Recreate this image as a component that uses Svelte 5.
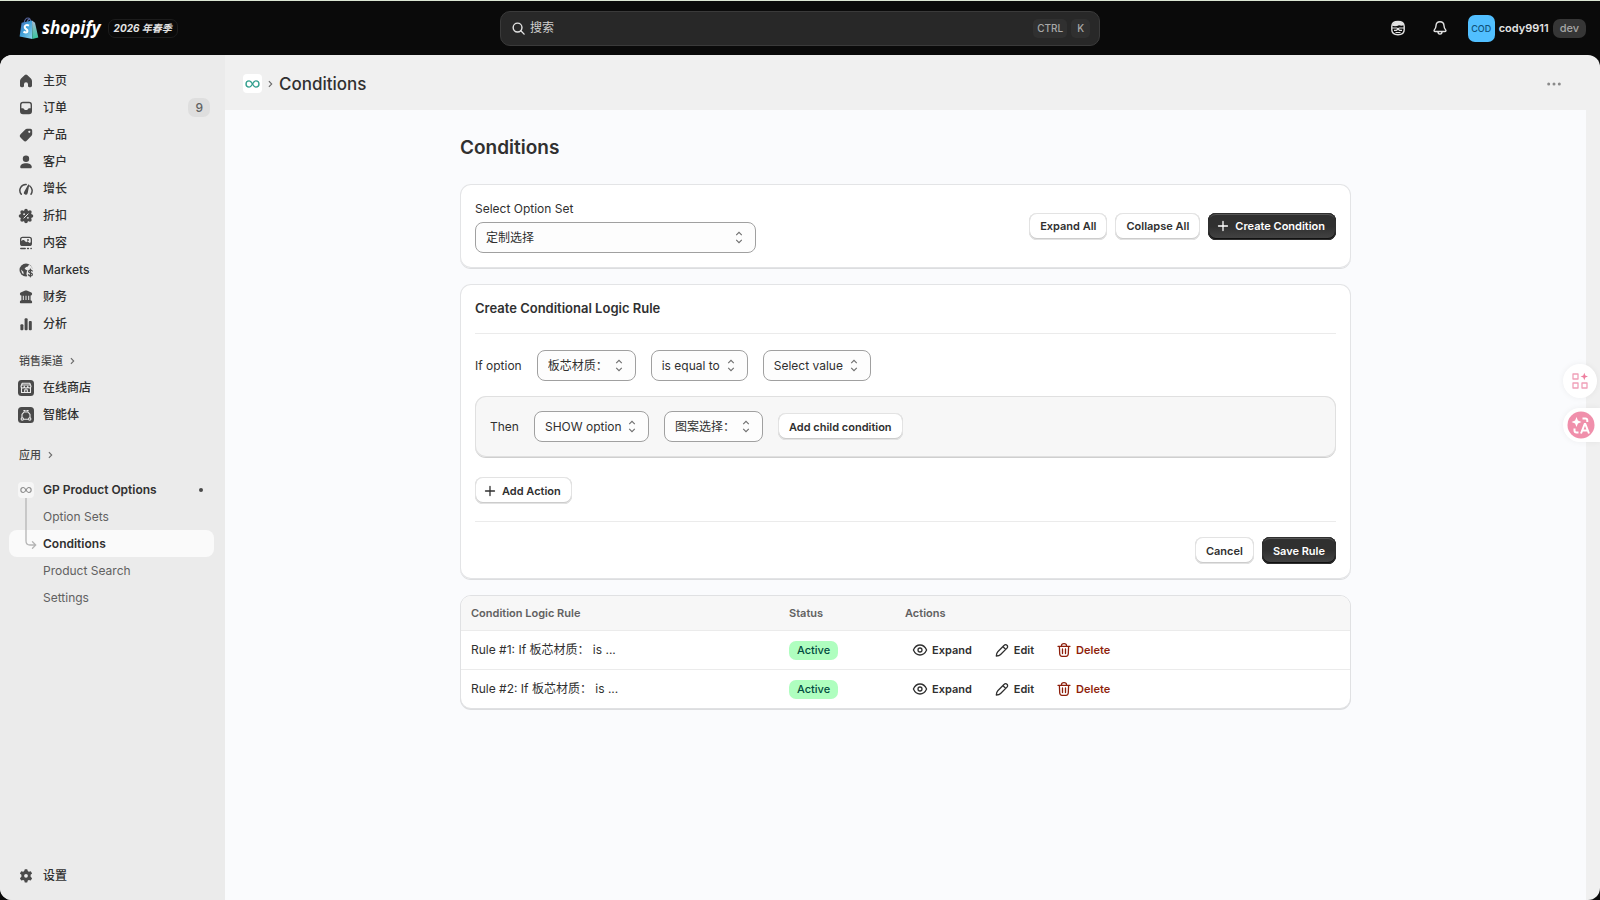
<script lang="ts">
	const mainNav = [
		{ icon: 'home', label: '主页' },
		{ icon: 'orders', label: '订单', count: 9 },
		{ icon: 'products', label: '产品' },
		{ icon: 'customers', label: '客户' },
		{ icon: 'growth', label: '增长' },
		{ icon: 'discounts', label: '折扣' },
		{ icon: 'content', label: '内容' },
		{ icon: 'markets', label: 'Markets' },
		{ icon: 'finance', label: '财务' },
		{ icon: 'analytics', label: '分析' }
	];

	const channels = [
		{ icon: 'store', label: '在线商店' },
		{ icon: 'agent', label: '智能体' }
	];

	const appPages = ['Option Sets', 'Conditions', 'Product Search', 'Settings'];
	let currentPage = $state('Conditions');

	const rules = [
		{ id: 1, name: 'Rule #1: If 板芯材质： is ...', status: 'Active' },
		{ id: 2, name: 'Rule #2: If 板芯材质： is ...', status: 'Active' }
	];
</script>

<svelte:head>
	<title>Conditions</title>
</svelte:head>

{#snippet icon(name: string)}
	<svg class="icon" viewBox="0 0 16 16" aria-hidden="true">
		{#if name === 'home'}
			<path
				d="M6.8 2.1a1.8 1.8 0 0 1 2.4 0l3.7 3.5c.7.7 1.1 1.6 1.1 2.5v4.4c0 1-.7 1.7-1.6 1.7h-1.2c-.7 0-1.2-.5-1.2-1.2v-1.8a2 2 0 0 0-4 0V13c0 .7-.5 1.2-1.2 1.2H3.6c-.9 0-1.6-.7-1.6-1.7V8.1c0-.9.4-1.8 1.1-2.5z"
			/>
		{:else if name === 'orders'}
			<path
				fill-rule="evenodd"
				d="M5 1.8h6a3 3 0 0 1 3 3v6.4a3 3 0 0 1-3 3H5a3 3 0 0 1-3-3V4.8a3 3 0 0 1 3-3zm0 1.4c-.9 0-1.6.7-1.6 1.6v3.4h1.5c.6 0 .9.3 1.1.8.3.7.8 1 2 1s1.7-.3 2-1c.2-.5.5-.8 1.1-.8h1.5V4.8c0-.9-.7-1.6-1.6-1.6z"
			/>
		{:else if name === 'products'}
			<path
				fill-rule="evenodd"
				d="M9 1.8h3.3c1.1 0 1.900.8 1.900 1.900V7c0 .7-.3 1.300-.7 1.800l-4.600 4.800a2.400 2.400 0 0 1-3.400 0l-3-3a2.400 2.400 0 0 1 0-3.400l4.800-4.700c.5-.5 1-.7 1.700-.7zm2.300 4.100a1.100 1.100 0 1 0 0-2.200 1.100 1.100 0 0 0 0 2.200z"
			/>
		{:else if name === 'customers'}
			<circle cx="8" cy="4.7" r="3.2" />
			<path d="M2.2 13c0-2.300 2.600-3.700 5.800-3.700s5.800 1.400 5.800 3.700c0 .8-.6 1.300-1.300 1.300h-9c-.7 0-1.300-.5-1.300-1.300z" />
		{:else if name === 'growth'}
			<path
				class="line"
				d="M3.300 13.200a5.900 5.900 0 0 1 4.900-9.700M11.800 5a5.900 5.900 0 0 1 1.200 8.200"
			/>
			<path d="M10.700 3.400c.4 0 .6.400.5.800L9.700 12a1.900 1.900 0 1 1-3.500-1.300l4-7.100c.1-.1.300-.2.500-.2z" />
		{:else if name === 'discounts'}
			<circle cx="8" cy="8" r="5.800" />
			<path
				class="scallop"
				d="M8 2.500v0M11.900 4.100v0M13.500 8v0M11.900 11.900v0M8 13.500v0M4.100 11.900v0M2.500 8v0M4.100 4.100v0"
			/>
			<path class="cut" d="M5.900 10.100l4.200-4.200" />
			<circle class="hole" cx="6.100" cy="6.200" r=".9" />
			<circle class="hole" cx="9.900" cy="9.800" r=".9" />
		{:else if name === 'content'}
			<path
				fill-rule="evenodd"
				d="M4.600 1.800h6.800A2.600 2.600 0 0 1 14 4.400v4a2.600 2.600 0 0 1-2.600 2.600H4.600A2.600 2.600 0 0 1 2 8.400v-4a2.600 2.600 0 0 1 2.600-2.600zm0 1.300c-.8 0-1.300.6-1.300 1.300v1.700l1.500-1c.5-.3 1-.3 1.400.1l2 2 .6-.4c.5-.4 1.100-.3 1.500.1l1.400 1c.6-.2 1-.3 1-.8V4.400c0-.7-.5-1.300-1.300-1.300z"
			/>
			<circle cx="10" cy="5" r=".9" />
			<path class="line" d="M2.800 13.500h4.400M9.600 13.500h.8M13 13.500h.2" />
		{:else if name === 'markets'}
			<circle cx="8" cy="8" r="6.500" />
			<path class="hole" d="M8.300 2.900l2 .2-1.800 2-2 .8L5 7.200l1.600 1.600 2.200.4.5 1.400-1.700 2.400-.5 1.500-1.800-.6-.3-2.300-2.200-3-.3-2.200L4.500 4z" opacity=".0" />
			<path class="hole" d="M11 2.600l2.400 2 1.300 3.200-1.700-1-2 .2-1.400 1.600-1.800-.8-1.200-1.200 1.500-1.500 1.800-.5z" />
			<path class="hole" d="M3 7.600l2.300 2.100.4 2.600-1.600-1.100z" />
			<path class="hole" d="M10.200 6.500h6V16H8.700l.6-2-.9-1.800.4-2.800z" />
			<path class="thin" d="M14.200 9.100c-.3-.7-1-1-1.800-1-1 0-1.800.5-1.800 1.400 0 2 3.800.9 3.800 2.900 0 .9-.8 1.500-1.900 1.500-1 0-1.800-.4-2.100-1.200M12.400 7.200v7.600" />
		{:else if name === 'finance'}
			<path
				fill-rule="evenodd"
				d="M7.200 1.600c.5-.2 1.100-.2 1.600 0l4.500 2c.5.300.8.800.8 1.300 0 .9-.7 1.500-1.500 1.500v4.900c.8.100 1.500.8 1.500 1.600v.6c0 .4-.3.700-.7.700H2.600c-.4 0-.7-.3-.7-.7v-.6c0-.8.700-1.500 1.500-1.600V6.400c-.8 0-1.500-.6-1.500-1.500 0-.5.300-1 .8-1.300zM4.800 6.800v4.300h1V6.800zm2.700 0v4.300h1V6.800zm2.700 0v4.300h1V6.800z"
			/>
		{:else if name === 'analytics'}
			<rect x="2.400" y="8.200" width="3" height="6" rx="1" />
			<rect x="6.600" y="2.200" width="3" height="12" rx="1" />
			<rect x="10.800" y="5" width="3" height="9.200" rx="1" />
		{:else if name === 'settings'}
			<path
				fill-rule="evenodd"
				d="M6.800 1.200h2.400l.6 1.900 1 .6 2-.5 1.300 2.200-1.500 1.400v2l1.500 1.500-1.300 2.200-2-.6-1 .6-.6 1.900H6.800l-.6-1.900-1-.6-2 .6-1.300-2.200 1.500-1.500v-2L1.900 5.400l1.300-2.200 2 .5 1-.6zM8 9.700a1.900 1.900 0 1 0 0-3.800 1.900 1.900 0 0 0 0 3.800z"
			/>
		{:else if name === 'store'}
			<rect x="0" y="0" width="16" height="16" rx="3.500" />
			<path class="light" d="M3.500 7v5.500h9V7M4.200 3.200h7.600l1.200 3a1.600 1.600 0 0 1-3.300.2 1.700 1.700 0 0 1-3.400 0A1.600 1.600 0 0 1 3 6.200zM6.700 12.500V9.700h2.600v2.800M4 5h8" />
		{:else if name === 'agent'}
			<rect x="0" y="0" width="16" height="16" rx="3.500" />
			<path class="light" d="M6 5h4l2 2.300v3.300M6 5L4 7.300v3.300M6.300 12.300h3.400M5.800 3.600h1.400M8.800 3.600h1.400" />
			<circle class="light" cx="4.300" cy="12" r="1.200" />
			<circle class="light" cx="11.700" cy="12" r="1.200" />
		{:else if name === 'plus'}
			<path class="stroke" d="M8 3.500v9M3.500 8h9" />
		{:else if name === 'eye'}
			<path class="stroke" d="M1.400 8c1.300-2.900 3.700-5 6.600-5s5.300 2.100 6.600 5c-1.300 2.900-3.700 5-6.600 5S2.700 10.900 1.400 8z" />
			<circle class="stroke" cx="8" cy="8" r="2" />
		{:else if name === 'pencil'}
			<path class="stroke" d="M10.200 3.300a1.900 1.900 0 0 1 2.800 0c.8.800.8 2 0 2.800l-6.400 6.400c-1 1-2.600 1.400-4.300 1.500.1-1.700.5-3.300 1.500-4.300zM9 4.700l2.600 2.600" />
		{:else if name === 'trash'}
			<path class="stroke" d="M2 4.300h12M5.500 4V3.600C5.500 2.300 6.300 1.600 8 1.600s2.500.7 2.500 2V4M3.400 4.500l.3 7.300c.1 1.600.9 2.500 2.300 2.500h4c1.400 0 2.200-.9 2.300-2.500l.3-7.300M6.500 7v4.500M9.500 7v4.500" />
		{/if}
	</svg>
{/snippet}

{#snippet infinity()}
	<svg viewBox="0 0 16 10" aria-hidden="true">
		<path
			d="M8 5C6.800 2.800 5.700 1.700 4.400 1.700a3.300 3.300 0 0 0 0 6.600C5.700 8.300 6.800 7.200 8 5s2.300-3.300 3.600-3.300a3.300 3.300 0 0 1 0 6.600C10.300 8.300 9.200 7.200 8 5z"
			fill="none"
			stroke="currentColor"
			stroke-width="1.500"
		/>
	</svg>
{/snippet}

{#snippet picker(id: string, label: string, value: string)}
	<span class="picker">
		<select {id} aria-label={label}>
			<option>{value}</option>
		</select>
		<svg viewBox="0 0 8 14" aria-hidden="true">
			<path d="M1 4.500l3-3 3 3M1 9.500l3 3 3-3" />
		</svg>
	</span>
{/snippet}

<header class="topbar">
	<div class="brand">
		<svg class="bag" viewBox="0 0 20 22" aria-hidden="true">
			<defs>
				<linearGradient id="bag" x1="0" y1="0" x2="1" y2="1">
					<stop offset="0" stop-color="#4a69b4" />
					<stop offset=".45" stop-color="#3f9fd8" />
					<stop offset="1" stop-color="#8fd6ee" />
				</linearGradient>
				<linearGradient id="side" x1="0" y1="0" x2="0" y2="1">
					<stop offset="0" stop-color="#a9b9d6" />
					<stop offset="1" stop-color="#35c49b" />
				</linearGradient>
			</defs>
			<path d="M5.200 6C5.600 3 7.200 1 9 1s2.600 1.600 2.600 4M8 5.500C8.500 3 9.800 1.700 11 2.200" fill="none" stroke="#56649a" stroke-width="1.200" />
			<path d="M2.600 5.800L13 3.600 13.400 22 .6 19.600z" fill="url(#bag)" />
			<path d="M13 3.600l3 2.200 3.300 14.600-5.900 1.600z" fill="url(#side)" />
			<path d="M10 8.700c-2.700-1.500-4.800.2-4.200 1.900.5 1.500 2.700 1.800 2.700 3.500 0 1.900-2.300 1.700-4 .5" fill="none" stroke="#fff" stroke-width="2" />
		</svg>
		<span class="wordmark">shopify</span>
		<span class="edition">2026 年春季</span>
	</div>

	<label class="search">
		<svg viewBox="0 0 16 16" aria-hidden="true">
			<circle cx="7" cy="7" r="4.700" />
			<path d="M10.500 10.500l3.500 3.500" />
		</svg>
		<input type="text" placeholder="搜索" aria-label="搜索" />
		<kbd>CTRL</kbd>
		<kbd>K</kbd>
	</label>

	<div class="account">
		<button class="bare" aria-label="Sidekick">
			<svg viewBox="0 0 16 16" aria-hidden="true">
				<path d="M1.800 6.200C2 3 4.400 1.500 8 1.500S14 3 14.200 6.200v3.600c0 3-2.200 4.900-6.200 4.900s-6.200-1.900-6.200-4.900z" fill="none" stroke="#e3e3e3" stroke-width="1.400" />
				<path d="M2 5.800C3 2.600 5 1.500 8 1.500s5.300 1.300 6 3.600c-1.600.9-3.300.8-5 .2-2 1-4.500 1-7 .5z" fill="#e3e3e3" />
				<path d="M2 8h4.800L8 8.800 9.200 8H14M4 10.300h2.300L8 9.200l1.700 1.100H12M5.500 12.500h5" fill="none" stroke="#e3e3e3" stroke-width="1.200" />
			</svg>
		</button>
		<button class="bare bell" aria-label="Notifications">
			<svg viewBox="0 0 16 16" aria-hidden="true">
				<path d="M8 1.700c-2.500 0-3.900 1.700-4 4-.1 2-.6 2.900-1.500 3.900-.8.900-.4 1.900.7 1.900h9.600c1.100 0 1.500-1 .7-1.900-.9-1-1.400-1.900-1.500-3.900-.1-2.300-1.500-4-4-4zM6 11.800c0 1.300.8 2.300 2 2.300s2-1 2-2.300" fill="none" stroke="#e3e3e3" stroke-width="1.400" />
			</svg>
		</button>
		<button class="user">
			<span class="avatar">COD</span>
			<span>cody9911</span>
			<span class="env">dev</span>
		</button>
	</div>
</header>

<div class="frame">
	<aside class="sidebar">
		<nav aria-label="Main">
			{#each mainNav as item (item.label)}
				<a class="nav-item" href="#{item.icon}">
					{@render icon(item.icon)}
					<span>{item.label}</span>
					{#if item.count}<span class="count">{item.count}</span>{/if}
				</a>
			{/each}

			<button class="section">
				销售渠道
				<svg viewBox="0 0 6 10" aria-hidden="true"><path d="M1 1.500L4.500 5 1 8.500" /></svg>
			</button>
			{#each channels as item (item.label)}
				<a class="nav-item" href="#{item.icon}">
					{@render icon(item.icon)}
					<span>{item.label}</span>
				</a>
			{/each}

			<button class="section apps">
				应用
				<svg viewBox="0 0 6 10" aria-hidden="true"><path d="M1 1.500L4.500 5 1 8.500" /></svg>
			</button>
			<div class="app-tree">
				<a class="nav-item app" href="#app">
					<span class="app-icon">{@render infinity()}</span>
					<span>GP Product Options</span>
					<span class="dot"></span>
				</a>
				{#each appPages as page (page)}
					<a
						class="nav-item sub"
						class:active={page === currentPage}
						href="#{page}"
						onclick={() => (currentPage = page)}>{page}</a
					>
				{/each}
				<svg class="branch" viewBox="0 0 12 54" aria-hidden="true">
					<path d="M1 0v43q0 4 4 4h5.500M7.500 43.800l3.200 3.200-3.200 3.200" />
				</svg>
			</div>
		</nav>
		<a class="nav-item" href="#settings">
			{@render icon('settings')}
			<span>设置</span>
		</a>
	</aside>

	<div class="main">
		<div class="titlebar">
			<span class="app-icon large">{@render infinity()}</span>
			<svg class="crumb" viewBox="0 0 6 10" aria-hidden="true"><path d="M1 1.500L4.500 5 1 8.500" /></svg>
			<span class="crumb-title">Conditions</span>
			<button class="bare more" aria-label="More actions">
				<svg viewBox="0 0 14 4" aria-hidden="true">
					<circle cx="1.700" cy="2" r="1.500" />
					<circle cx="7" cy="2" r="1.500" />
					<circle cx="12.300" cy="2" r="1.500" />
				</svg>
			</button>
		</div>

		<main class="canvas">
			<div class="page">
				<h1>Conditions</h1>

				<section class="card option-set">
					<div class="field">
						<label for="option-set">Select Option Set</label>
						{@render picker('option-set', 'Select Option Set', '定制选择')}
					</div>
					<div class="buttons">
						<button class="btn">Expand All</button>
						<button class="btn">Collapse All</button>
						<button class="btn primary with-icon">{@render icon('plus')}Create Condition</button>
					</div>
				</section>

				<section class="card rule">
					<h2>Create Conditional Logic Rule</h2>
					<div class="condition">
						<span>If option</span>
						{@render picker('if-option', 'If option', '板芯材质：')}
						{@render picker('operator', 'Operator', 'is equal to')}
						{@render picker('value', 'Value', 'Select value')}
					</div>
					<div class="then">
						<span>Then</span>
						{@render picker('action', 'Action', 'SHOW option')}
						{@render picker('target', 'Target option', '图案选择：')}
						<button class="btn">Add child condition</button>
					</div>
					<button class="btn with-icon add">{@render icon('plus')}Add Action</button>
					<div class="buttons footer">
						<button class="btn">Cancel</button>
						<button class="btn primary">Save Rule</button>
					</div>
				</section>

				<section class="card rules">
					<table>
						<thead>
							<tr>
								<th class="col-rule">Condition Logic Rule</th>
								<th class="col-status">Status</th>
								<th>Actions</th>
							</tr>
						</thead>
						<tbody>
							{#each rules as rule (rule.id)}
								<tr>
									<td>{rule.name}</td>
									<td><span class="status">{rule.status}</span></td>
									<td>
										<div class="actions">
											<button class="link">{@render icon('eye')}Expand</button>
											<button class="link">{@render icon('pencil')}Edit</button>
											<button class="link danger">{@render icon('trash')}Delete</button>
										</div>
									</td>
								</tr>
							{/each}
						</tbody>
					</table>
				</section>
			</div>
		</main>
	</div>
</div>

<div class="floating">
	<button class="bubble" aria-label="Tools">
		<svg viewBox="0 0 18 18" aria-hidden="true">
			<path d="M2 2h5v5H2zM2 11h5v5H2zM11 11h5v5h-5z" fill="none" stroke="#f0a0b8" stroke-width="1.300" stroke-linejoin="round" />
			<path d="M13.300.8l1 2.700 2.700 1-2.700 1-1 2.700-1-2.700-2.700-1 2.700-1z" fill="#ee7f9f" />
		</svg>
	</button>
	<button class="bubble tab" aria-label="Translate">
		<svg viewBox="0 0 28 28" aria-hidden="true">
			<circle cx="14" cy="14" r="13.500" fill="#f08fab" />
			<path d="M9.500 6l1.400 3.600 3.600 1.400-3.600 1.400L9.500 16l-1.400-3.600L4.500 11l3.600-1.400z" fill="#fff" />
			<path d="M15.500 7.500h2.800q2 0 2 2V11M7.500 17.500v2q0 2 2 2h2M14 22.500l3.700-9.500h.6l3.700 9.500M15.200 19.500h5.600" fill="none" stroke="#fff" stroke-width="2" />
		</svg>
	</button>
</div>

<style>
	:global(body) {
		background: #0a0a0a;
		color: #303030;
		font-family: Inter, 'Noto Sans CJK SC', sans-serif;
		font-size: 12px;
		line-height: 16px;
	}

	button,
	input,
	select {
		font: inherit;
		color: inherit;
	}

	button {
		padding: 0;
		border: 0;
		background: none;
		cursor: pointer;
	}

	a {
		color: inherit;
		text-decoration: none;
	}

	svg {
		display: block;
		flex: none;
	}

	.icon {
		width: 16px;
		height: 16px;
		fill: currentColor;
	}

	.icon .line,
	.icon .thin,
	.icon .light,
	.icon .cut,
	.icon .scallop,
	.icon .stroke {
		fill: none;
		stroke: currentColor;
		stroke-width: 1.5;
		stroke-linecap: round;
		stroke-linejoin: round;
	}

	.icon .thin {
		stroke-width: 1.2;
	}

	.icon .stroke {
		stroke-width: 1.3;
	}

	.icon .scallop {
		stroke-width: 3.6;
	}

	.icon .hole {
		fill: #ebebeb;
	}

	.icon .cut {
		stroke: #ebebeb;
		stroke-width: 1;
	}

	.icon .light {
		stroke: #ebebeb;
		stroke-width: 1.1;
	}

	.topbar {
		display: grid;
		grid-template-columns: 1fr minmax(200px, 600px) 1fr;
		align-items: center;
		box-sizing: border-box;
		height: 55px;
		padding: 0 14px;
		border-top: 1px solid #dbe6d3;
		color: #e3e3e3;
	}

	.brand,
	.account,
	.user {
		display: flex;
		align-items: center;
	}

	.brand {
		padding-left: 5px;
	}

	.bag {
		width: 20px;
		height: 22px;
	}

	.wordmark {
		margin-left: 3px;
		font: italic 700 17px/24px 'Open Sans', sans-serif;
		color: #fff;
	}

	.edition {
		margin-left: 7px;
		padding: 0 5px;
		border: 1px solid #1c1c1c;
		border-radius: 7px;
		font-size: 10px;
		font-style: italic;
		font-weight: 700;
		line-height: 17px;
	}

	.search {
		display: flex;
		align-items: center;
		gap: 4px;
		box-sizing: border-box;
		height: 35px;
		padding: 0 9px 0 10px;
		border: 1px solid #3a3a3a;
		border-radius: 10px;
		background: #282828;
	}

	.search svg {
		width: 15px;
		height: 15px;
		fill: none;
		stroke: #e3e3e3;
		stroke-width: 1.5;
		stroke-linecap: round;
	}

	.search input {
		flex: 1;
		min-width: 0;
		padding: 0;
		border: 0;
		outline: 0;
		background: none;
	}

	.search input::placeholder {
		color: #d0d0d0;
		opacity: 1;
	}

	kbd {
		padding: 0 4px;
		border-radius: 5px;
		background: #303030;
		color: #a8a8a8;
		font: 500 10px/19px Inter, sans-serif;
	}

	kbd:last-child {
		padding: 0 6px;
	}

	.account {
		justify-content: flex-end;
	}

	.bare svg {
		width: 16px;
		height: 16px;
	}

	.bell {
		margin: 0 20px 0 26px;
	}

	.user {
		gap: 4px;
		font-size: 11px;
		font-weight: 600;
	}

	.avatar {
		width: 27px;
		border-radius: 7px;
		background: #51bfff;
		color: #10527a;
		font-size: 9px;
		font-weight: 500;
		line-height: 27px;
		text-align: center;
	}

	.env {
		padding: 0 7px;
		border-radius: 7px;
		background: #363636;
		color: #a8a8a8;
		font-weight: 500;
		line-height: 19px;
	}

	.frame {
		display: flex;
		min-height: calc(100vh - 55px);
		border-radius: 12px;
		overflow: hidden;
		background: #f0f0f0;
	}

	.sidebar {
		display: flex;
		flex-direction: column;
		justify-content: space-between;
		flex: 0 0 225px;
		box-sizing: border-box;
		padding: 12px 11px 11px 9px;
		background: #ebebeb;
	}

	.nav-item {
		display: flex;
		align-items: center;
		gap: 9px;
		height: 27px;
		padding: 0 4px 0 9px;
		border-radius: 8px;
		font-weight: 500;
		color: #303030;
	}

	.nav-item.app {
		font-weight: 600;
	}

	.nav-item .icon {
		color: #4a4a4a;
	}

	.count {
		margin-left: auto;
		padding: 0 7px;
		border-radius: 7px;
		background: #dedede;
		color: #616161;
		line-height: 19px;
	}

	.section {
		display: flex;
		align-items: center;
		gap: 7px;
		height: 27px;
		margin-top: 10px;
		padding: 0 10px;
		font-size: 11px;
		font-weight: 500;
		color: #4a4a4a;
	}

	.section.apps {
		margin: 13px 0 8px;
	}

	.section svg,
	.crumb {
		width: 5px;
		height: 8px;
		fill: none;
		stroke: #6a6a6a;
		stroke-width: 1.4;
	}

	.app-tree {
		position: relative;
	}

	.app-icon {
		display: grid;
		place-items: center;
		width: 16px;
		height: 16px;
		border-radius: 4px;
		background: #f6f6f6;
		color: #8a8a8a;
	}

	.app-icon svg {
		width: 12px;
		height: 8px;
	}

	.app-icon.large {
		width: 19px;
		height: 19px;
		background: #fff;
		color: #35a08f;
	}

	.app-icon.large svg {
		width: 15px;
		height: 10px;
	}

	.dot {
		width: 4px;
		height: 4px;
		margin: 0 7px 0 auto;
		border-radius: 50%;
		background: #4a4a4a;
	}

	.sub {
		padding-left: 34px;
		font-weight: 400;
		color: #616161;
	}

	.sub.active {
		background: #fafafa;
		font-weight: 600;
		color: #303030;
	}

	.branch {
		position: absolute;
		top: 22px;
		left: 16px;
		width: 12px;
		height: 54px;
		fill: none;
		stroke: #b5b5b5;
		stroke-width: 1.3;
		stroke-linecap: round;
	}

	.main {
		display: flex;
		flex-direction: column;
		flex: 1;
		min-width: 0;
	}

	.titlebar {
		display: flex;
		align-items: center;
		box-sizing: border-box;
		height: 55px;
		padding: 2px 39px 0 18px;
	}

	.crumb {
		margin: 0 6px;
	}

	.crumb-title {
		font-size: 17px;
		font-weight: 500;
		line-height: 24px;
	}

	.more {
		margin-left: auto;
	}

	.more svg {
		width: 14px;
		height: 4px;
		fill: #8a8a8a;
	}

	.canvas {
		flex: 1;
		margin-right: 14px;
		padding: 23px 24px;
		background: #fafbfd;
	}

	.page {
		max-width: 891px;
		margin: 0 auto;
	}

	h1 {
		margin: 0 0 22px;
		font-size: 19px;
		font-weight: 600;
		line-height: 29px;
	}

	.card {
		margin-bottom: 16px;
		padding: 15px;
		border-radius: 11px;
		background: #fff;
		box-shadow:
			inset 0 0 0 1px #e3e4e6,
			0 1px 0 #dcdddf;
	}

	.option-set {
		display: flex;
		align-items: center;
		justify-content: space-between;
	}

	.field {
		display: grid;
		flex: 0 1 281px;
		gap: 5px;
		padding-top: 2px;
	}

	.picker {
		position: relative;
		display: grid;
	}

	.picker select {
		appearance: none;
		height: 31px;
		padding: 0 26px 0 10px;
		border: 1px solid #a0a0a0;
		border-radius: 8px;
		background: #fdfdfd;
	}

	.picker svg {
		position: absolute;
		top: 9px;
		right: 13px;
		width: 8px;
		height: 13px;
		fill: none;
		stroke: #6f6f6f;
		stroke-width: 1.2;
		pointer-events: none;
	}

	.buttons {
		display: flex;
		gap: 8px;
	}

	.btn {
		height: 27px;
		padding: 0 11px;
		border-radius: 8px;
		background: #fff;
		box-shadow:
			inset 0 0 0 1px #e3e3e3,
			inset 0 -1px 0 1px #cccccc;
		font-size: 11px;
		font-weight: 600;
		white-space: nowrap;
	}

	.with-icon {
		display: flex;
		align-items: center;
		gap: 4px;
		padding-left: 7px;
	}

	.primary {
		background: linear-gradient(#303030 50%, #454545);
		box-shadow:
			inset 0 0 0 1px #303030,
			inset 0 -1px 0 1px #101010,
			inset 0 2px 0 #555;
		color: #fff;
	}

	h2 {
		margin: 0 0 15px;
		padding-bottom: 15px;
		border-bottom: 1px solid #ebebeb;
		font-size: 13px;
		font-weight: 600;
		line-height: 19px;
	}

	.condition,
	.then {
		display: flex;
		align-items: center;
		gap: 15px;
	}

	.condition {
		padding-top: 1px;
	}

	.then {
		margin: 15px 0 20px;
		padding: 15px;
		border-radius: 11px;
		background: #f7f7f7;
		box-shadow:
			inset 0 0 0 1px #e0e0e0,
			0 1px 0 #cfcfcf;
	}

	.footer {
		justify-content: flex-end;
		margin-top: 17px;
		padding-top: 15px;
		border-top: 1px solid #ebebeb;
	}

	.rules {
		padding: 0;
		overflow: hidden;
		border: 1px solid #e0e1e3;
		box-shadow: 0 1px 0 #dcdddf;
	}

	table {
		width: 100%;
		table-layout: fixed;
		border-collapse: collapse;
	}

	th,
	td {
		height: 38px;
		padding: 0 10px;
		border-top: 1px solid #ebebeb;
		text-align: left;
	}

	th {
		height: 34px;
		border-top: 0;
		background: #f7f7f7;
		font-size: 11px;
		font-weight: 600;
		color: #616161;
	}

	.col-rule {
		width: 298px;
	}

	.col-status {
		width: 96px;
	}

	.status {
		display: inline-block;
		padding: 0 8px;
		border-radius: 7px;
		background: #affebf;
		color: #014b40;
		font-size: 11px;
		font-weight: 500;
		line-height: 19px;
	}

	.actions {
		display: flex;
		gap: 22px;
		padding-left: 7px;
	}

	.link {
		display: flex;
		align-items: center;
		gap: 4px;
		font-size: 11px;
		font-weight: 600;
	}

	.danger {
		color: #8e1f0b;
	}

	.floating {
		position: fixed;
		top: 364px;
		right: 0;
		display: grid;
		justify-items: end;
		gap: 10px;
	}

	.bubble {
		display: grid;
		place-items: center;
		width: 34px;
		height: 34px;
		margin-right: 3px;
		border-radius: 50%;
		background: #fff;
		box-shadow: 0 0 6px rgb(0 0 0 / 6%);
	}

	.bubble svg {
		width: 18px;
		height: 18px;
	}

	.tab {
		width: 37px;
		margin: 0;
		padding-right: 2px;
		border-radius: 17px 0 0 17px;
	}

	.tab svg {
		width: 28px;
		height: 28px;
	}
</style>
